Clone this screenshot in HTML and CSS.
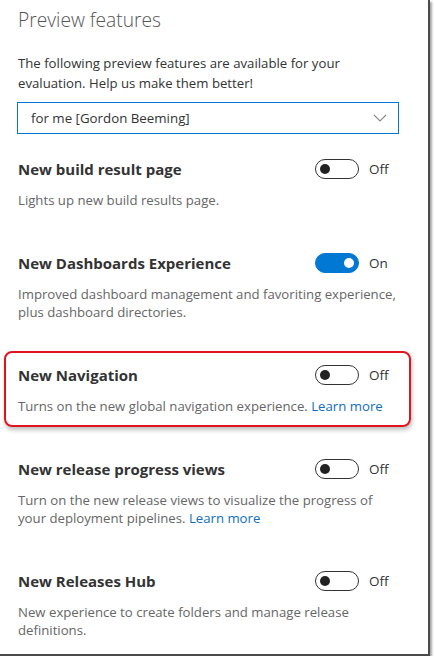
FILE: index.html
```html
<!DOCTYPE html>
<html lang="en">
<head>
<meta charset="utf-8">
<title>Preview features</title>
<link rel="stylesheet" href="styles.css">
</head>
<body>
<div class="panel">
  <h1 class="title">Preview features</h1>
  <p class="intro">The following preview features are available for your evaluation. Help us make them better!</p>
  <div class="select">
    <span class="select-text">for me [Gordon Beeming]</span>
    <svg class="chevron" width="14" height="8" viewBox="0 0 14 8"><path d="M1 1 L7 7 L13 1" fill="none" stroke="#8a8a8a" stroke-width="1.1"/></svg>
  </div>

  <div class="features">
    <div class="feature">
      <div class="feature-head">
        <div class="feature-name">New build result page</div>
        <div class="toggle-group"><span class="toggle"></span><span class="toggle-label">Off</span></div>
      </div>
      <p class="feature-desc">Lights up new build results page.</p>
    </div>

    <div class="feature">
      <div class="feature-head">
        <div class="feature-name">New Dashboards Experience</div>
        <div class="toggle-group"><span class="toggle on"></span><span class="toggle-label">On</span></div>
      </div>
      <p class="feature-desc">Improved dashboard management and favoriting experience, plus dashboard directories.</p>
    </div>

    <div class="feature highlight">
      <div class="feature-head">
        <div class="feature-name">New Navigation</div>
        <div class="toggle-group"><span class="toggle"></span><span class="toggle-label">Off</span></div>
      </div>
      <p class="feature-desc">Turns on the new global navigation experience. <a class="link" href="#">Learn more</a></p>
    </div>

    <div class="feature">
      <div class="feature-head">
        <div class="feature-name">New release progress views</div>
        <div class="toggle-group"><span class="toggle"></span><span class="toggle-label">Off</span></div>
      </div>
      <p class="feature-desc">Turn on the new release views to visualize the progress of your deployment pipelines. <a class="link" href="#">Learn more</a></p>
    </div>

    <div class="feature">
      <div class="feature-head">
        <div class="feature-name">New Releases Hub</div>
        <div class="toggle-group"><span class="toggle"></span><span class="toggle-label">Off</span></div>
      </div>
      <p class="feature-desc">New experience to create folders and manage release definitions.</p>
    </div>
  </div>
</div>
</body>
</html>
```
FILE: styles.css
```css
html, body {
  margin: 0;
  padding: 0;
  background: #ffffff;
}
body {
  font-family: "Open Sans", "Noto Sans", sans-serif;
  color: #333333;
}
.panel {
  width: 430px;
  height: 656px;
  box-sizing: border-box;
  padding: 6px 29px 0 18px;
  border-right: 2px solid #4a4a4a;
  border-bottom: 2px solid #4a4a4a;
  box-shadow: 2px 2px 2px rgba(0,0,0,0.35);
  overflow: hidden;
}
.title {
  margin: 0;
  font-size: 19.2px;
  font-weight: 300;
  line-height: 28px;
  color: #555555;
}
.intro {
  margin: 19px 0 0 0;
  font-size: 13.2px;
  line-height: 20px;
  color: #333333;
}
.select {
  margin: 9px 0 0 -1px;
  height: 32px;
  box-sizing: border-box;
  border: 1px solid #0078d4;
  display: flex;
  align-items: center;
  justify-content: space-between;
  padding: 0 11px 0 13px;
}
.select-text {
  font-size: 13.3px;
  color: #333333;
}
.features {
  display: flex;
  flex-direction: column;
  gap: 44px;
  margin-top: 25px;
}
.feature {
  position: relative;
}
.feature-head {
  display: flex;
  align-items: center;
  justify-content: space-between;
  height: 20px;
}
.feature-name {
  font-size: 15px;
  font-weight: 700;
  color: #333333;
}
.toggle-group {
  display: flex;
  align-items: center;
  gap: 10px;
  width: 84px;
}
.toggle {
  position: relative;
  width: 44px;
  height: 20px;
  box-sizing: border-box;
  border: 1px solid #333333;
  border-radius: 10px;
  background: #ffffff;
}
.toggle::after {
  content: "";
  position: absolute;
  left: 4px;
  top: 4px;
  width: 10px;
  height: 10px;
  border-radius: 50%;
  background: #222222;
}
.toggle.on {
  background: #0078d4;
  border-color: #0078d4;
}
.toggle.on::after {
  left: auto;
  right: 4px;
  background: #ffffff;
}
.toggle-label {
  font-size: 13.5px;
  color: #333333;
}
.feature-desc {
  margin: 12px 0 0 0;
  font-size: 13.2px;
  line-height: 18px;
  color: #666666;
}
.link {
  color: #106ebe;
  text-decoration: none;
}
.highlight::after {
  content: "";
  position: absolute;
  left: -14px;
  right: -12px;
  top: -14px;
  bottom: -12px;
  border: 2px solid #e0141e;
  border-radius: 8px;
  box-shadow: 1px 3px 4px rgba(0,0,0,0.25);
  pointer-events: none;
}
```
